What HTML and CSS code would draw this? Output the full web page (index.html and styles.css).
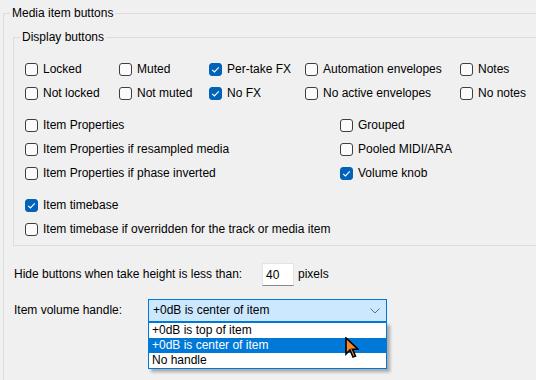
FILE: index.html
```html
<!DOCTYPE html>
<html lang="en">

<head>
    <meta charset="UTF-8">
    <meta name="viewport" content="width=device-width, initial-scale=1.0">
    <title>Media item buttons</title>
    <link rel="stylesheet" href="styles.css">
</head>

<body>
    <fieldset class="group outer">
        <legend>Media item buttons</legend>

        <fieldset class="group inner">
            <legend>Display buttons</legend>

            <div class="grid five">
                <label class="check"><span class="box"></span>Locked</label>
                <label class="check"><span class="box"></span>Muted</label>
                <label class="check"><span class="box on"><svg viewBox="0 0 13 13"><path d="M3.2 6.8 L5.4 9 L9.8 4.3" /></svg></span>Per-take FX</label>
                <label class="check"><span class="box"></span>Automation envelopes</label>
                <label class="check"><span class="box"></span>Notes</label>

                <label class="check"><span class="box"></span>Not locked</label>
                <label class="check"><span class="box"></span>Not muted</label>
                <label class="check"><span class="box on"><svg viewBox="0 0 13 13"><path d="M3.2 6.8 L5.4 9 L9.8 4.3" /></svg></span>No FX</label>
                <label class="check"><span class="box"></span>No active envelopes</label>
                <label class="check"><span class="box"></span>No notes</label>
            </div>

            <div class="grid two">
                <label class="check"><span class="box"></span>Item Properties</label>
                <label class="check"><span class="box"></span>Grouped</label>

                <label class="check"><span class="box"></span>Item Properties if resampled media</label>
                <label class="check"><span class="box"></span>Pooled MIDI/ARA</label>

                <label class="check"><span class="box"></span>Item Properties if phase inverted</label>
                <label class="check"><span class="box on"><svg viewBox="0 0 13 13"><path d="M3.2 6.8 L5.4 9 L9.8 4.3" /></svg></span>Volume knob</label>
            </div>

            <div class="stack">
                <label class="check"><span class="box on"><svg viewBox="0 0 13 13"><path d="M3.2 6.8 L5.4 9 L9.8 4.3" /></svg></span>Item timebase</label>
                <label class="check"><span class="box"></span>Item timebase if overridden for the track or media item</label>
            </div>
        </fieldset>

        <div class="field-row hide-row">
            <span class="field-label hide-label">Hide buttons when take height is less than:</span>
            <input class="num" type="text" value="40">
            <span class="unit">pixels</span>
        </div>

        <div class="field-row">
            <span class="field-label handle-label">Item volume handle:</span>
            <div class="combo">
                <span class="combo-text">+0dB is center of item</span>
                <svg class="chevron" viewBox="0 0 10 6"><path d="M0.5 0.5 L5 5 L9.5 0.5" /></svg>

                <ul class="dropdown">
                    <li>+0dB is top of item</li>
                    <li class="selected">+0dB is center of item</li>
                    <li>No handle</li>
                </ul>
            </div>
        </div>
    </fieldset>

    <!-- mouse pointer over the open list -->
    <svg class="pointer" viewBox="0 0 14 22" width="14" height="22">
        <path d="M1 1 L1 17 L5 13 L8 20 L10.5 19 L7.5 12.2 L13 12.2 Z" />
    </svg>
</body>

</html>
```

FILE: styles.css
```css
* {
    box-sizing: border-box;
}

html,
body {
    margin: 0;
    padding: 0;
    height: 380px;
    overflow: hidden;
}

body {
    background: #f0f0f0;
    font-family: 'Liberation Sans', Arial, sans-serif;
    font-size: 12px;
    line-height: 15px;
    color: #000;
    position: relative;
}

/* group boxes run on past the right and bottom edge, so their far borders stay out of view */
.group {
    border: 1px solid #dcdcdc;
    margin: 0;
    min-width: 0;
}

.group legend {
    padding: 0 2px;
    line-height: 15px;
}

.outer {
    margin: 6px 0 0 3px;
    width: 534px;
    height: 375px;
    padding: 9px 0 0 9px;
}

.outer>legend {
    margin-left: -3px;
}

.inner {
    width: 524px;
    height: 216px;
    padding: 12px 0 0 11px;
}

.inner>legend {
    margin-left: -5px;
}

.grid {
    display: grid;
    grid-auto-rows: 24px;
}

.five {
    grid-template-columns: 94px 90px 96px 155px auto;
}

.two {
    grid-template-columns: 315px auto;
    margin-top: 8px;
}

.stack {
    display: flex;
    flex-direction: column;
    margin-top: 8px;
}

.check {
    display: flex;
    align-items: center;
    gap: 5px;
    height: 24px;
    white-space: nowrap;
}

.box {
    width: 13px;
    height: 13px;
    border: 1px solid #3f3f3f;
    border-radius: 3px;
    background: #fbfbfb;
    flex: none;
    display: flex;
}

.box.on {
    background: #0063b8;
    border-color: #0063b8;
}

.box svg {
    width: 13px;
    height: 13px;
    margin: -1px;
}

.box path {
    fill: none;
    stroke: #fff;
    stroke-width: 1.1;
}

.field-row {
    display: flex;
    align-items: center;
    height: 23px;
    padding-left: 1px;
}

.hide-row {
    margin-top: 17px;
}

.hide-row+.field-row {
    margin-top: 13px;
}

.hide-label {
    width: 248px;
}

.handle-label {
    width: 134px;
}

.num {
    width: 32px;
    height: 23px;
    margin: 0;
    padding: 0 0 0 3px;
    border: 1px solid #e3e3e3;
    border-bottom-color: #8a8a8a;
    background: #fff;
    font: inherit;
    color: #000;
}

.unit {
    margin-left: 4px;
}

.combo {
    position: relative;
    width: 239px;
    height: 23px;
    border: 1px solid #0078d7;
    background: #cce8ff;
    display: flex;
    align-items: center;
    padding-left: 4px;
}

.combo-text {
    flex: 1;
}

.chevron {
    width: 10px;
    height: 6px;
    margin-right: 6px;
}

.chevron path {
    fill: none;
    stroke: #6d6d6d;
    stroke-width: 1;
}

.dropdown {
    position: absolute;
    top: 22px;
    left: -1px;
    width: 239px;
    margin: 0;
    padding: 0;
    list-style: none;
    background: #fff;
    border: 1px solid #0078d7;
    box-shadow: 3px 3px 3px rgba(0, 0, 0, 0.3);
}

.dropdown li {
    height: 15px;
    line-height: 15px;
    padding-left: 3px;
    white-space: nowrap;
}

.dropdown li.selected {
    background: #0078d7;
    color: #fff;
}

.pointer {
    position: absolute;
    left: 345px;
    top: 337px;
}

.pointer path {
    fill: #f5862a;
    stroke: #000;
    stroke-width: 1.6;
    stroke-linejoin: miter;
}
```
